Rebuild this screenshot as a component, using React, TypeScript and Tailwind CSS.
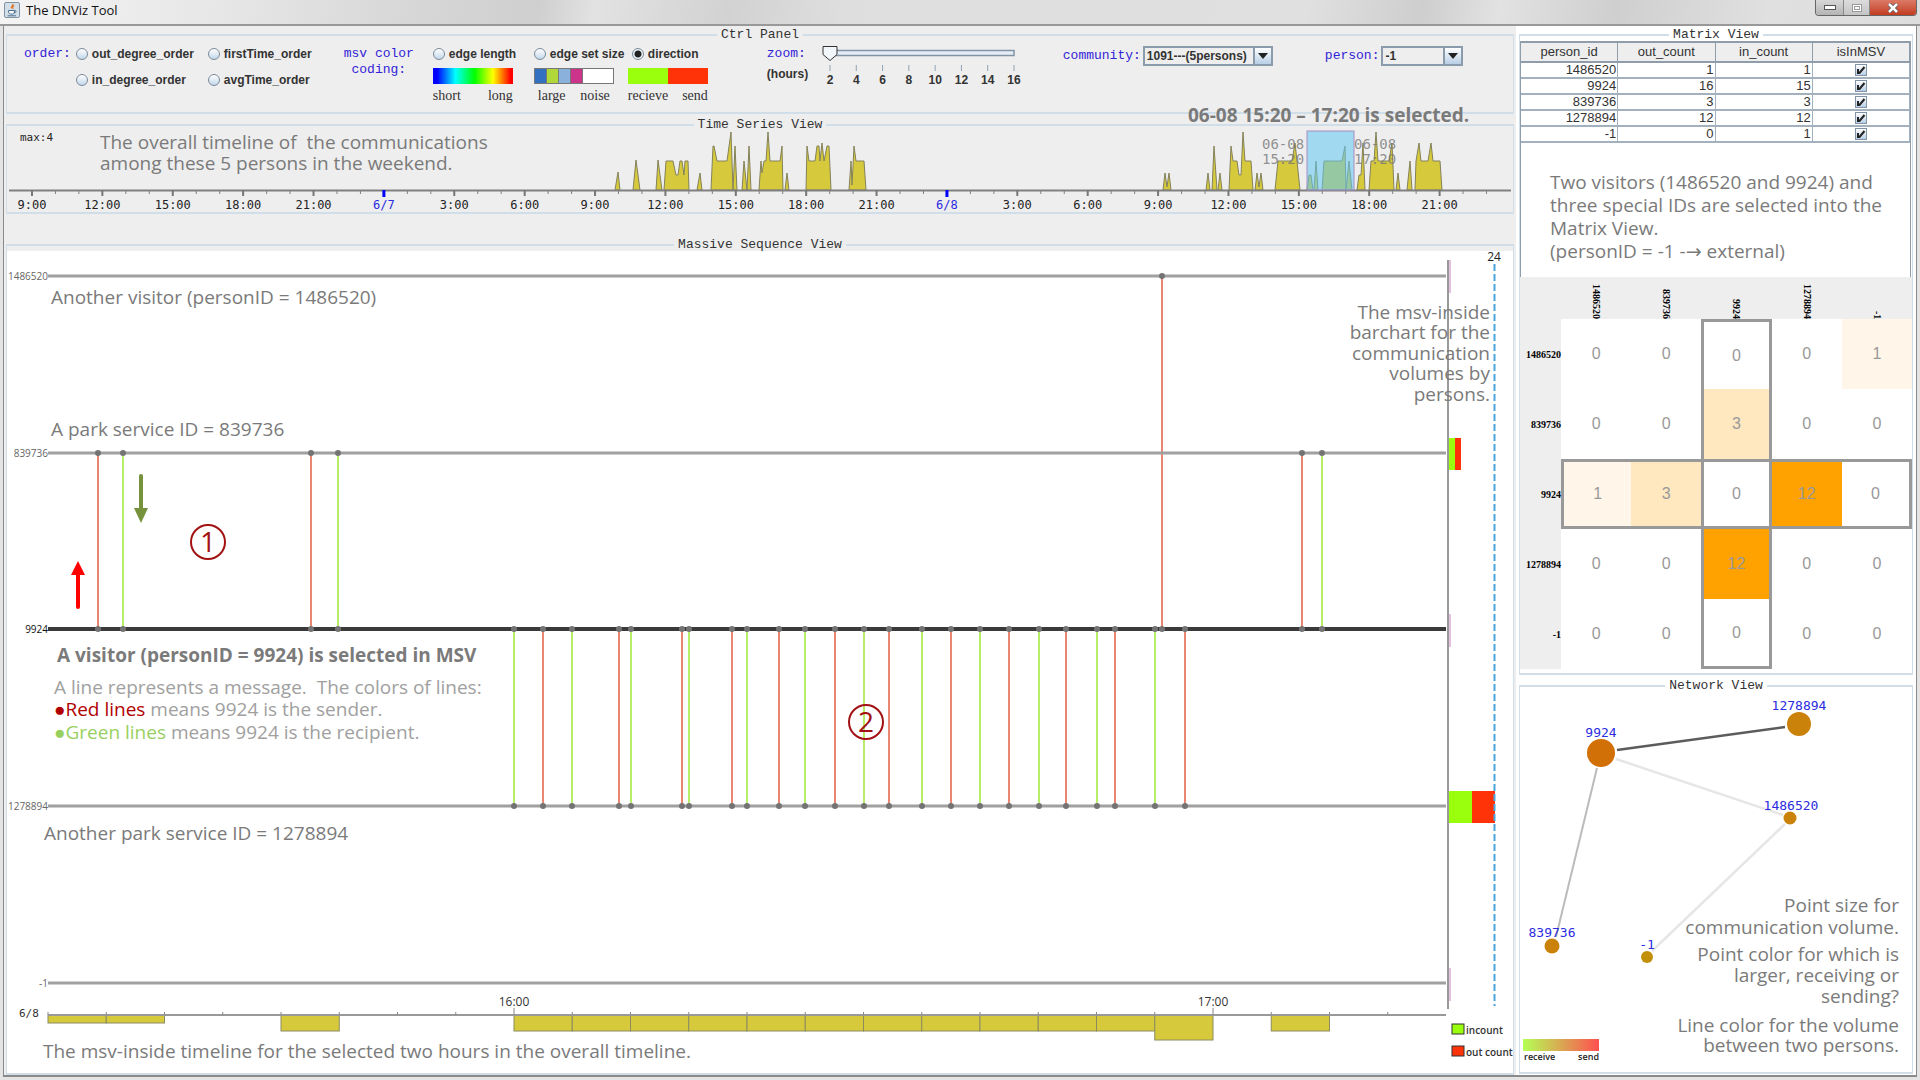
import { useState } from "react"
import clsx from "clsx"

const MONO = "font-['Liberation_Mono',monospace]"
const NOTE = "font-['Open_Sans',sans-serif]"

const orders = ["out_degree_order", "firstTime_order", "in_degree_order", "avgTime_order"]

const persons = [
  { id: "1486520", out: 1, in: 1 },
  { id: "9924", out: 16, in: 15 },
  { id: "839736", out: 3, in: 3 },
  { id: "1278894", out: 12, in: 12 },
  { id: "-1", out: 0, in: 1 },
]

const matrixIds = ["1486520", "839736", "9924", "1278894", "-1"]
const matrix = [
  [0, 0, 0, 0, 1],
  [0, 0, 3, 0, 0],
  [1, 3, 0, 12, 0],
  [0, 0, 12, 0, 0],
  [0, 0, 0, 0, 0],
]
const selectedIndex = 2

// [x, y] outlines of the activity peaks, the axis lies at y = 190
const peaks = [
  "615,190 618,172 620,190",
  "633,190 636,160 640,190",
  "656,190 658,160 662,190",
  "664,190 666,161 673,161 676,175 678,175 680,161 682,161 684,175 685,161 688,161 689,190",
  "697,190 700,173 702,190",
  "711,190 713,146 714,146 717,161 727,161 731,132 733,190 735,146 737,190",
  "742,190 744,161 747,190 749,146 751,190",
  "759,190 761,161 762,173 764,161 766,161 768,132 770,161 780,161 782,146 783,190",
  "785,190 787,173 789,190",
  "806,190 807,146 809,161 815,161 817,146 819,146 820,161 822,143 824,161 827,146 829,146 831,190",
  "849,190 851,161 852,185 854,146 856,161 864,161 866,190",
  "1163,190 1165,173 1167,187 1169,173 1171,190",
  "1206,190 1208,173 1210,190",
  "1212,190 1214,146 1217,190",
  "1218,190 1220,173 1222,190",
  "1229,190 1231,146 1233,161 1237,161 1239,175 1241,175 1243,132 1245,161 1251,161 1253,190",
  "1255,190 1257,173 1259,187 1261,173 1263,190",
  "1275,190 1278,161 1292,161 1295,143 1297,161 1300,190",
  "1307,190 1309,175 1311,175 1313,190",
  "1314,190 1316,161 1318,190",
  "1322,190 1324,161 1342,161 1345,146 1346,190 1349,161 1352,190",
  "1357,190 1359,175 1361,175 1363,143 1365,190",
  "1369,190 1371,161 1374,161 1376,132 1378,161 1389,161 1392,143 1394,190",
  "1396,190 1398,173 1400,190",
  "1407,190 1410,161 1412,190",
  "1415,190 1416,161 1419,143 1421,161 1428,161 1431,143 1433,161 1440,161 1442,190",
]

const hourLabels = [
  "9:00", "12:00", "15:00", "18:00", "21:00", "6/7", "3:00", "6:00", "9:00", "12:00", "15:00",
  "18:00", "21:00", "6/8", "3:00", "6:00", "9:00", "12:00", "15:00", "18:00", "21:00",
]

const RED = "#e88672"
const GREEN = "#b6ee6a"

const lanes = [
  { id: "1486520", y: 276 },
  { id: "839736", y: 453 },
  { id: "9924", y: 629 },
  { id: "1278894", y: 806 },
  { id: "-1", y: 983 },
]

type Message = [x: number, from: number, to: number, color: string]

const messages: Message[] = [
  [1162, 276, 629, RED],
  [98, 453, 629, RED],
  [123, 453, 629, GREEN],
  [311, 453, 629, RED],
  [338, 453, 629, GREEN],
  [1302, 453, 629, RED],
  [1322, 453, 629, GREEN],
  [514, 629, 806, GREEN],
  [543, 629, 806, RED],
  [572, 629, 806, GREEN],
  [619, 629, 806, RED],
  [631, 629, 806, GREEN],
  [682, 629, 806, RED],
  [689, 629, 806, GREEN],
  [732, 629, 806, RED],
  [747, 629, 806, GREEN],
  [779, 629, 806, RED],
  [805, 629, 806, GREEN],
  [835, 629, 806, RED],
  [864, 629, 806, GREEN],
  [889, 629, 806, RED],
  [922, 629, 806, GREEN],
  [951, 629, 806, RED],
  [980, 629, 806, GREEN],
  [1009, 629, 806, RED],
  [1039, 629, 806, GREEN],
  [1066, 629, 806, RED],
  [1097, 629, 806, GREEN],
  [1115, 629, 806, RED],
  [1155, 629, 806, GREEN],
  [1185, 629, 806, RED],
]

// height of the bar in each five minute slot, starting at 15:20
const slots = [8, 8, 0, 0, 16, 0, 0, 0, 16, 16, 16, 16, 16, 16, 16, 16, 16, 16, 16, 25, 0, 16, 0, 0]
const slotX = (i: number) => 48 + i * 58.25

interface PanelProps {
  title: string
  className?: string
  children: React.ReactNode
}

function Panel({ title, className, children }: PanelProps) {
  return (
    <fieldset className={clsx("min-w-0 border-x border-y-2 border-[#d0deea]", className)}>
      <legend className={`mx-auto px-1 text-[13px] leading-4 text-[#333] ${MONO}`}>{title}</legend>
      {children}
    </fieldset>
  )
}

interface RadioProps {
  name: string
  label: string
  checked?: boolean
}

function Radio({ name, label, checked }: RadioProps) {
  return (
    <label className="flex h-4 items-center gap-1 text-xs font-bold whitespace-nowrap text-[#333]">
      <input
        type="radio"
        name={name}
        defaultChecked={checked}
        className="size-3 appearance-none rounded-full border border-[#7a8a99] bg-linear-to-b from-white to-[#c3d8ea] checked:bg-[radial-gradient(circle,#222_0_3px,#eef4f9_4px)]"
      />
      {label}
    </label>
  )
}

interface ComboProps {
  label: string
  options: string[]
  width: string
}

function Combo({ label, options, width }: ComboProps) {
  return (
    <label className="flex h-5 items-center gap-0.5">
      <span className={`text-[13px] text-[#3223d8] ${MONO}`}>{label}</span>
      <span className={clsx("relative block h-5", width)}>
        <select className="block h-5 w-full appearance-none border-2 border-[#8a9bab] bg-[#eee] pl-0.5 text-xs font-bold text-[#333]">
          {options.map((option) => (
            <option key={option}>{option}</option>
          ))}
        </select>
        <span className="pointer-events-none absolute inset-y-0 right-0 flex w-5 items-center justify-center border-2 border-[#8a9bab] bg-linear-to-b from-white to-[#b8cfe5]">
          <svg viewBox="0 0 10 6" className="w-2.5">
            <path d="M0 0h10L5 6z" fill="#222" />
          </svg>
        </span>
      </span>
    </label>
  )
}

function TitleBar() {
  return (
    <header className="flex h-[26px] items-start justify-between border-b-2 border-[#999] bg-[linear-gradient(100deg,#f4f4f4_0%,#e6e6e6_12%,#d6d6d6_22%,#cfcfcf_28%,#e2e2e2_31%,#d2d2d2_38%,#dedede_44%,#e0e0e0_68%,#cecece_74%,#e2e2e2_78%,#cfcfcf_84%,#e0e0e0_92%,#ddd_100%)] pr-[3px] pl-1">
      <div className="flex items-center gap-1.5 pt-0.5">
        <svg viewBox="0 0 16 16" className="size-4">
          <rect x="0.5" y="0.5" width="15" height="15" rx="1.5" fill="#d3dfe8" stroke="#7f93a5" />
          <path d="M8.800 1.800c1.200 1.600-2.600 2.600-1.200 4.600M10.200 3.600c-1.800 1-2 1.800-1 3.200" stroke="#e0762a" strokeWidth="1.300" fill="none" />
          <path d="M4.500 8.500h6c0 2.500-.8 3.500-1.800 3.500H6.300c-1 0-1.800-1-1.800-3.500z" fill="#fff" stroke="#4d6f8f" />
          <path d="M10.500 8.600c2.400-.5 2.200 2.200-.6 2.200M3.500 13.800h8.500" stroke="#4d6f8f" fill="none" />
        </svg>
        <h1 className={`text-[13px] leading-4 text-[#111] ${NOTE}`}>The DNViz Tool</h1>
      </div>
      <div className="flex h-4 overflow-hidden rounded-b border border-t-0 border-[#666]">
        <button aria-label="Minimize" className="flex w-7 items-center justify-center border-r border-[#888] bg-linear-to-b from-[#d8d8d8] to-[#b4b4b4]">
          <span className="h-[5px] w-3 border border-[#555] bg-white" />
        </button>
        <button aria-label="Maximize" className="flex w-[26px] items-center justify-center border-r border-[#888] bg-linear-to-b from-[#dcdcdc] to-[#c4c4c4]">
          <span className="flex h-2 w-2.5 items-center justify-center border border-[#999] bg-white">
            <span className="h-1 w-1.5 border border-[#999]" />
          </span>
        </button>
        <button aria-label="Close" className="flex w-[46px] items-center justify-center bg-linear-to-b from-[#dc7a66] to-[#c23a1e]">
          <svg viewBox="0 0 12 10" className="w-3">
            <path d="M2 1l8 8M10 1L2 9" stroke="#555" strokeWidth="4" />
            <path d="M2 1l8 8M10 1L2 9" stroke="#fff" strokeWidth="2.500" />
          </svg>
        </button>
      </div>
    </header>
  )
}

function ZoomSlider() {
  const [hours, setHours] = useState(2)
  const ticks = [2, 4, 6, 8, 10, 12, 14, 16]
  const x = (value: number) => 9 + ((value - 2) / 14) * 184

  return (
    <div className="relative w-[204px]">
      <svg viewBox="0 0 204 44" className="w-full">
        <rect x="9" y="4.500" width="184" height="5" fill="#e4edf5" stroke="#8193a5" strokeWidth="1.500" />
        {ticks.map((tick) => (
          <g key={tick}>
            <path d={`M${x(tick)} 19v6`} stroke="#8fa3b5" />
            <text x={x(tick)} y="38" textAnchor="middle" className="text-xs font-bold" fill="#333">
              {tick}
            </text>
          </g>
        ))}
        <path d={`M${x(hours) - 7} .5h14v8l-7 6-7-6z`} fill="#f2f7fb" stroke="#333" />
      </svg>
      <input
        id="zoom"
        type="range"
        min={2}
        max={16}
        step={2}
        value={hours}
        onChange={(e) => setHours(Number(e.target.value))}
        className="absolute inset-x-0 top-0 h-4 w-full opacity-0"
      />
    </div>
  )
}

function CtrlPanel() {
  return (
    <Panel title="Ctrl Panel">
      <div className="flex h-[69px] items-start pt-[3px] pl-[17px] font-['Liberation_Sans',sans-serif]">
        <span className={`mr-[5px] text-[13px] leading-4 text-[#3223d8] ${MONO}`}>order:</span>
        <div className="grid grid-cols-[132px_135px] gap-y-2.5">
          {orders.map((order) => (
            <Radio key={order} name="order" label={order} />
          ))}
        </div>

        <span className={`w-[90px] text-[13px] leading-4 text-[#3223d8] ${MONO}`}>
          <span className="block w-[72px] text-center">msv color coding:</span>
        </span>
        <div className="w-[101px]">
          <Radio name="coding" label="edge length" />
          <div className="mt-1.5 h-4 w-20 bg-[linear-gradient(90deg,#00f_5%,#0ff_28%,#0f0_52%,#ff0_75%,#f00_97%)]" />
          <div className="mt-1 flex w-20 justify-between font-['Liberation_Serif',serif] text-sm leading-4 text-[#333]">
            <span>short</span>
            <span>long</span>
          </div>
        </div>
        <div className="w-[94px]">
          <Radio name="coding" label="edge set size" />
          <div className="mt-1.5 flex h-4 w-20 divide-x divide-[#777] border border-[#777] bg-white">
            <span className="w-3 bg-[#3470c2]" />
            <span className="w-3 bg-[#b0d83a]" />
            <span className="w-3 bg-[#8ab0dc]" />
            <span className="w-3 bg-[#cc348c]" />
            <span />
          </div>
          <div className="mt-1 flex w-20 justify-between px-1 font-['Liberation_Serif',serif] text-sm leading-4 text-[#333]">
            <span>large</span>
            <span>noise</span>
          </div>
        </div>
        <div className="w-[139px]">
          <div className="pl-1">
            <Radio name="coding" label="direction" checked />
          </div>
          <div className="mt-1.5 flex h-4 w-20">
            <span className="flex-1 bg-[#99ff0c]" />
            <span className="flex-1 bg-[#ff3208]" />
          </div>
          <div className="mt-1 flex w-20 justify-between font-['Liberation_Serif',serif] text-sm leading-4 text-[#333]">
            <span>recieve</span>
            <span>send</span>
          </div>
        </div>

        <label htmlFor="zoom" className="w-[54px] leading-4">
          <span className={`block text-[13px] text-[#3223d8] ${MONO}`}>zoom:</span>
          <span className="mt-1 block text-xs font-bold text-[#333]">(hours)</span>
        </label>
        <ZoomSlider />

        <div className="ml-[38px] flex gap-[52px]">
          <Combo label="community:" options={["1091---(5persons)"]} width="w-[130px]" />
          <Combo label="person:" options={["-1", "1486520", "9924", "839736", "1278894"]} width="w-[82px]" />
        </div>
      </div>
    </Panel>
  )
}

function TimeSeriesView() {
  return (
    <Panel title="Time Series View" className="mt-[3px]">
      <svg viewBox="7 133 1506 79" className="relative w-full overflow-visible font-['DejaVu_Sans_Mono',monospace] text-xs">
        <text x="20" y="141" fill="#222" className="text-[11px]">max:4</text>
        {peaks.map((points) => (
          <polygon key={points} points={points} fill="#d6ca3c" stroke="#84825a" />
        ))}
        <path d="M9 190.500H1511" stroke="#808080" strokeWidth="2" />
        {Array.from({ length: 63 }, (_, i) => (
          <path key={i} d={`M${32 + i * 23.46} 191v3`} stroke="#808080" />
        ))}
        {hourLabels.map((label, i) => {
          const isDay = label.includes("/")
          const x = 32 + i * 70.38
          return (
            <g key={i}>
              <path d={`M${x} 190v${isDay ? 7 : 6}`} stroke={isDay ? "#00f" : "#777"} strokeWidth={isDay ? 3 : 2} />
              <text x={x} y="209" textAnchor="middle" fill={isDay ? "#2a2ae0" : "#222"}>{label}</text>
            </g>
          )
        })}
        <rect x="1307" y="131" width="47" height="59" fill="#62c8f4" fillOpacity="0.55" stroke="#a58cc0" />
        <g fill="#777" fillOpacity="0.8" className="text-sm">
          <text x="1262" y="149">06-08</text>
          <text x="1262" y="164">15:20</text>
          <text x="1354" y="149">06-08</text>
          <text x="1354" y="164">17:20</text>
        </g>
        <g fill="#7a7a7a" className={`text-[19px] ${NOTE}`}>
          <text x="100" y="149">The overall timeline of&nbsp; the communications</text>
          <text x="100" y="170">among these 5 persons in the weekend.</text>
          <text x="1188" y="122" className="font-bold">06-08 15:20 – 17:20 is selected.</text>
        </g>
      </svg>
    </Panel>
  )
}

function CircledNumber({ x, y, value }: { x: number; y: number; value: number }) {
  return (
    <g>
      <circle cx={x} cy={y} r="17" fill="none" stroke="#a31212" strokeWidth="2" />
      <text x={x} y={y + 10} textAnchor="middle" fill="#a31212" className="text-[28px]">{value}</text>
    </g>
  )
}

function MassiveSequenceView() {
  return (
    <Panel title="Massive Sequence View" className="mt-[23px]">
      <svg viewBox="8 251 1504 822" className={`relative -mt-0.5 w-full overflow-visible bg-white px-px ${NOTE}`}>
        {messages.map(([x, from, to, color]) => (
          <path key={x} d={`M${x} ${from}V${to}`} stroke={color} strokeWidth="2" />
        ))}
        {lanes.map(({ id, y }) => {
          const selected = id === "9924"
          return (
            <g key={id}>
              <path d={`M48 ${y}H1446`} stroke={selected ? "#3a3a3a" : "#a0a0a0"} strokeWidth={selected ? 4 : 3} />
              <text x="48" y={y + 4} textAnchor="end" fill={selected ? "#111" : "#666"} className="text-[10px]">{id}</text>
            </g>
          )
        })}
        {messages.map(([x, from, to]) => (
          <g key={x} fill="#737373">
            <circle cx={x} cy={from} r="3" />
            <circle cx={x} cy={to} r="3" />
          </g>
        ))}

        {/* volume bars per person */}
        <path d="M1450 260v33M1450 614v33M1450 968v33" stroke="#e3bfe0" strokeWidth="2" />
        <path d="M1448 260V1009" stroke="#999" strokeWidth="2" />
        <path d="M1449 438h6v32h-6zM1449 791h23v32h-23z" fill="#99ff0c" />
        <path d="M1455 438h6v32h-6zM1472 791h23v32h-23z" fill="#ff3208" />
        <path d="M1494.500 264V1006" stroke="#4aa5dc" strokeWidth="2" strokeDasharray="7 3" />
        <text x="1494" y="261" textAnchor="middle" fill="#222" className="text-xs">24</text>

        {/* timeline of the selected hours */}
        {slots.map((height, i) =>
          height > 0 ? (
            <rect key={i} x={slotX(i)} y="1015" width="58.25" height={height} fill="#d6ca3c" stroke="#8c8a60" />
          ) : null
        )}
        <path d="M48 1015H1446" stroke="#999" strokeWidth="2" />
        {slots.map((_, i) => (
          <path key={i} d={`M${slotX(i)} ${i % 12 === 8 ? 1008 : 1012}V1015`} stroke="#888" />
        ))}
        <g fill="#333" className="text-xs">
          <text x="19" y="1017" className="font-['DejaVu_Sans_Mono',monospace] text-[11px]">6/8</text>
          <text x={slotX(8)} y="1006" textAnchor="middle">16:00</text>
          <text x={slotX(20)} y="1006" textAnchor="middle">17:00</text>
        </g>

        <path d="M141 476V510" stroke="#76923c" strokeWidth="4" strokeLinecap="round" />
        <path d="M134 508h14l-7 15z" fill="#76923c" />
        <path d="M78 607V573" stroke="#f00" strokeWidth="4" strokeLinecap="round" />
        <path d="M71 575h14l-7-14z" fill="#f00" />
        <CircledNumber x={208} y={542} value={1} />
        <CircledNumber x={866} y={722} value={2} />

        <g fill="#7a7a7a" className="text-[19px]">
          <text x="51" y="304">Another visitor (personID = 1486520)</text>
          <text x="51" y="436">A park service ID = 839736</text>
          <text x="57" y="662" className="font-bold">A visitor (personID = 9924) is selected in MSV</text>
          <text x="44" y="840">Another park service ID = 1278894</text>
          <text x="43" y="1058">The msv-inside timeline for the selected two hours in the overall timeline.</text>
        </g>
        <g fill="#a0a0a0" className="text-[19px]">
          <text x="54" y="694">A line represents a message.&nbsp; The colors of lines:</text>
          <text x="54" y="716"><tspan fill="#b00000">●Red lines</tspan> means 9924 is the sender.</text>
          <text x="54" y="739"><tspan fill="#98d060">●Green lines</tspan> means 9924 is the recipient.</text>
        </g>
        <g fill="#7a7a7a" textAnchor="end" className="text-[19px]">
          <text x="1490" y="319">The msv-inside</text>
          <text x="1490" y="339">barchart for the</text>
          <text x="1490" y="360">communication</text>
          <text x="1490" y="380">volumes by</text>
          <text x="1490" y="401">persons.</text>
        </g>

        <rect x="1452" y="1024" width="12" height="10" fill="#99ff0c" stroke="#333" />
        <rect x="1452" y="1046" width="12" height="10" fill="#ff3208" stroke="#333" />
        <g fill="#333" className="text-[10px] font-semibold">
          <text x="1466" y="1034">incount</text>
          <text x="1466" y="1056">out count</text>
        </g>
      </svg>
    </Panel>
  )
}

function PersonTable() {
  return (
    <table className="w-full table-fixed border-separate border-spacing-0 border-t-2 border-[#8f9dab] text-[13px] text-[#333]">
      <thead>
        <tr className="h-5 bg-[#eee]">
          {["person_id", "out_count", "in_count", "isInMSV"].map((head) => (
            <th key={head} className="border-r border-b-2 border-[#8f9dab] p-0 font-normal leading-4">{head}</th>
          ))}
        </tr>
      </thead>
      <tbody>
        {persons.map((person) => (
          <tr key={person.id} className="h-4 text-right leading-[14px]">
            <td className="border-r border-b-2 border-[#a3b0bd] p-0 pr-px">{person.id}</td>
            <td className="border-r border-b-2 border-[#a3b0bd] p-0 pr-px">{person.out}</td>
            <td className="border-r border-b-2 border-[#a3b0bd] p-0 pr-px">{person.in}</td>
            <td className="border-r border-b-2 border-[#a3b0bd] p-0">
              <span className="relative mx-auto block size-3">
                <input
                  type="checkbox"
                  defaultChecked
                  aria-label={`${person.id} isInMSV`}
                  className="peer block size-3 appearance-none border border-[#8193a5] bg-linear-to-b from-white to-[#b8cfe5]"
                />
                <svg viewBox="0 0 12 12" className="pointer-events-none absolute inset-0 hidden peer-checked:block">
                  <path d="M3 5v4h1.500L9.500 3" stroke="#222" strokeWidth="2" fill="none" />
                </svg>
              </span>
            </td>
          </tr>
        ))}
      </tbody>
    </table>
  )
}

function cellColor(value: number) {
  switch (value) {
    case 1:
      return "bg-[#fff5e8]"
    case 3:
      return "bg-[#ffe7c0]"
    case 12:
      return "bg-[#ffa200]"
    default:
      return "bg-white"
  }
}

function HeatMap() {
  return (
    <table className="w-full table-fixed border-separate border-spacing-0 bg-[#eee]">
      <thead>
        <tr className="h-[42px]">
          <td className="w-[41px] p-0" />
          {matrixIds.map((id) => (
            <th key={id} scope="col" className="p-0 align-bottom">
              <span className="mr-auto ml-auto block h-10 w-3 text-right font-['Liberation_Serif',serif] text-[10px] leading-3 [writing-mode:vertical-rl]">
                {id}
              </span>
            </th>
          ))}
        </tr>
      </thead>
      <tbody>
        {matrix.map((row, r) => (
          <tr key={matrixIds[r]} className="h-[70px]">
            <th scope="row" className="p-0 text-right font-['Liberation_Serif',serif] text-[10px]">{matrixIds[r]}</th>
            {row.map((value, c) => (
              <td
                key={c}
                className={clsx(
                  "border-[#999] p-0 text-center text-base text-[#999]",
                  cellColor(value),
                  r === selectedIndex && "border-y-3",
                  r === selectedIndex && c === 0 && "border-l-3",
                  r === selectedIndex && c === 4 && "border-r-3",
                  c === selectedIndex && "border-x-3",
                  c === selectedIndex && r === 0 && "border-t-3",
                  c === selectedIndex && r === 4 && "border-b-3"
                )}
              >
                {value}
              </td>
            ))}
          </tr>
        ))}
      </tbody>
    </table>
  )
}

function MatrixView() {
  return (
    <Panel title="Matrix View" className="pb-1 font-['Liberation_Sans',sans-serif]">
      <div className="-mt-0.5 mr-px h-[236px] border-x border-[#8f9dab]">
        <PersonTable />
        <p className={`mt-7 pl-[29px] text-[19px] leading-[23px] text-[#7a7a7a] ${NOTE}`}>
          Two visitors (1486520 and 9924) and
          <br />
          three special IDs are selected into the
          <br />
          Matrix View.
          <br />
          (personID = -1 -<span className="font-['DejaVu_Sans',sans-serif]">→</span> external)
        </p>
      </div>
      <HeatMap />
    </Panel>
  )
}

function NetworkView() {
  return (
    <Panel title="Network View" className="mt-[3px]">
      <svg viewBox="1520 694 392 378" className={`w-full ${NOTE}`}>
        <defs>
          <linearGradient id="direction">
            <stop offset="0" stopColor="#b4ff55" />
            <stop offset="1" stopColor="#ff5050" />
          </linearGradient>
        </defs>
        <path d="M1617 750L1785 727" stroke="#5c5c5c" strokeWidth="2.500" />
        <path d="M1597 768L1556 937" stroke="#bbb" strokeWidth="2" />
        <path d="M1616 759L1783 815M1785 824L1652 951" stroke="#e6e6e6" strokeWidth="2.500" />
        <circle cx="1601" cy="753" r="14" fill="#d07006" />
        <circle cx="1799" cy="724" r="12" fill="#ca820a" />
        <circle cx="1790" cy="818" r="6.500" fill="#ca820a" />
        <circle cx="1552" cy="946" r="7.500" fill="#ca820a" />
        <circle cx="1647" cy="957" r="6" fill="#c2900a" />
        <g fill="#2c2ce0" textAnchor="middle" className="font-['DejaVu_Sans_Mono',monospace] text-[13px]">
          <text x="1799" y="710">1278894</text>
          <text x="1601" y="737">9924</text>
          <text x="1791" y="810">1486520</text>
          <text x="1552" y="937">839736</text>
          <text x="1647" y="949">-1</text>
        </g>
        <g fill="#7a7a7a" textAnchor="end" className="text-[19px]">
          <text x="1899" y="912">Point size for</text>
          <text x="1899" y="934">communication volume.</text>
          <text x="1899" y="961">Point color for which is</text>
          <text x="1899" y="982">larger, receiving or</text>
          <text x="1899" y="1003">sending?</text>
          <text x="1899" y="1032">Line color for the volume</text>
          <text x="1899" y="1052">between two persons.</text>
        </g>
        <rect x="1523" y="1039" width="76" height="12" fill="url(#direction)" />
        <g fill="#222" className="text-[9px] font-semibold">
          <text x="1524" y="1060">receive</text>
          <text x="1599" y="1060" textAnchor="end">send</text>
        </g>
      </svg>
    </Panel>
  )
}

export default function App() {
  return (
    <div className="bg-[#e4e4e4] pb-[3px]">
      <TitleBar />
      <main className="mx-[3px] flex border-x border-b-2 border-[#8a8a8a] bg-[#eee]">
        <div className="min-w-0 flex-1 px-0.5 pt-px">
          <CtrlPanel />
          <TimeSeriesView />
          <MassiveSequenceView />
        </div>
        <aside className="w-[400px] shrink-0 bg-white px-[3px] pt-px">
          <MatrixView />
          <NetworkView />
        </aside>
      </main>
    </div>
  )
}
